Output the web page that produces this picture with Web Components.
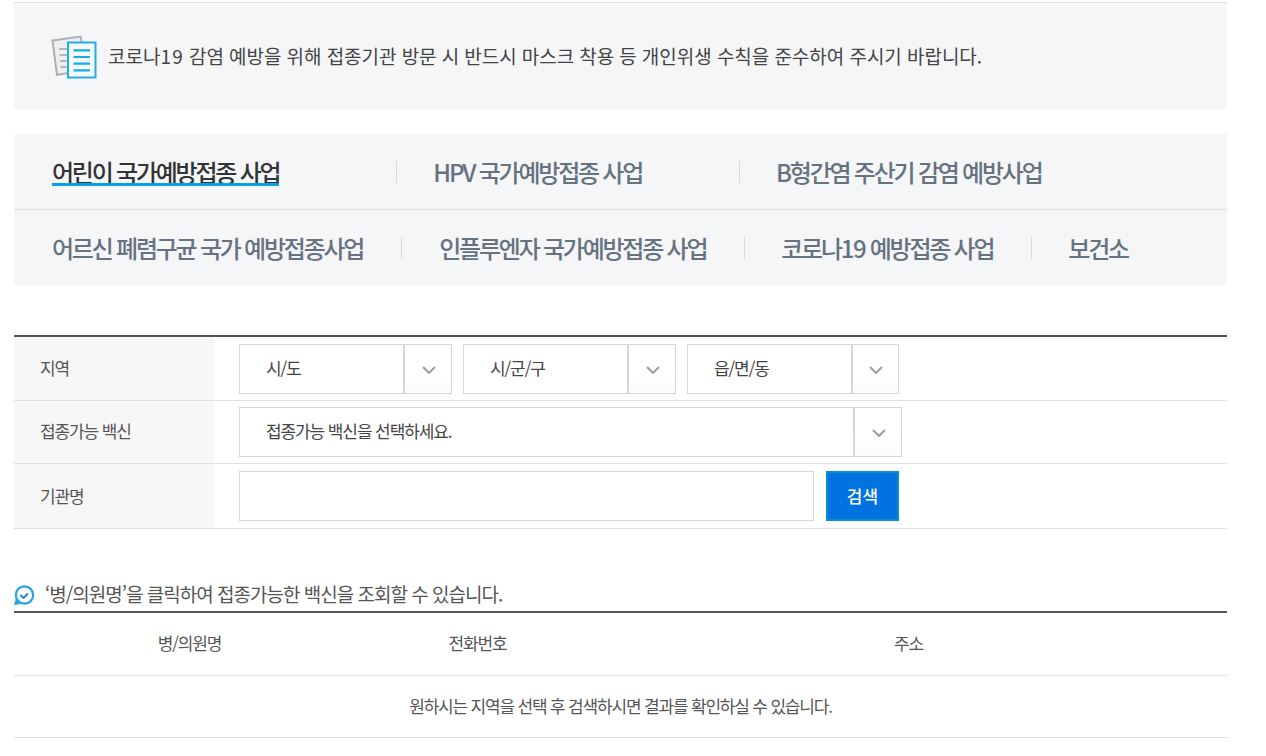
<!DOCTYPE html>
<html lang="ko">
<head>
<meta charset="utf-8">
<style>
html, body { margin: 0; padding: 0; background: #fff; }
body { font-family: "Noto Sans CJK KR", "Noto Sans", sans-serif; color: #444; overflow: hidden; }
</style>
</head>
<body>
<vac-page></vac-page>
<script>
class VacNotice extends HTMLElement {
    constructor() {
        super()
        this.attachShadow({ mode: "open" }).innerHTML = `
            <style>
            :host { display: flex; align-items: center; height: 105px; margin-top: 2px; border-top: 1px solid #e2e3e6; background: #f5f6f8; padding-left: 37px; }
            svg { display: block; width: 46px; height: 44px; margin-right: 11px; flex: none; margin-top: 1px; }
            span { font-size: 19px; word-spacing: -0.24px; color: #444; line-height: 26px; }
            </style>
            <svg viewBox="0 0 46 44" fill="none">
                <path d="M1.500 5.500L29.500 1.500L31 8L18 8L18 38L6 39.800Z" fill="#eceef0" stroke="#aeb0b4" stroke-width="2"/>
                <path d="M8 14h9M8.500 20h8.500M9 26h8M9.500 32h7.500" stroke="#b4b6ba" stroke-width="2"/>
                <rect x="17" y="7.500" width="27.500" height="35" fill="#f4fbfe" stroke="#29abe2" stroke-width="2"/>
                <path d="M22.500 15.300h16.500M22.500 22h16.500M22.500 28.700h16.500M22.500 35.300h16.500" stroke="#1fa8e6" stroke-width="2.200"/>
            </svg>
            <span><slot></slot></span>
        `
    }
}

class VacTabs extends HTMLElement {
    constructor() {
        super()
        this.attachShadow({ mode: "open" }).innerHTML = `
            <style>
            :host { display: block; margin-top: 25px; background: #f5f6f8; }
            </style>
            <slot></slot>
        `
    }
}

class VacTabRow extends HTMLElement {
    constructor() {
        super()
        this.attachShadow({ mode: "open" }).innerHTML = `
            <style>
            :host { display: flex; align-items: center; height: 75px; padding-left: 38px; }
            :host([line]) { border-top: 1px solid #dcdee2; }
            </style>
            <slot></slot>
        `
    }
}

class VacTab extends HTMLElement {
    constructor() {
        super()
        this.attachShadow({ mode: "open" }).innerHTML = `
            <style>
            :host { display: block; font-size: 24px; font-weight: 500; letter-spacing: -2.230px; color: #667280; line-height: 26px; position: relative; white-space: nowrap; }
            :host([active]) { color: #333; }
            u { display: none; position: absolute; left: 0; right: 0; bottom: -1px; height: 3px; background: #0aa0e6; }
            :host([active]) u { display: block; }
            :host([sep]) { margin-right: calc(var(--r) + var(--l)); }
            :host([sep])::after { content: ""; position: absolute; top: 2px; height: 22px; width: 1px; background: #d6d9dd; right: calc(var(--r) * -1); }
            </style>
            <slot></slot><u></u>
        `
    }
}

class VacFormRow extends HTMLElement {
    static get observedAttributes() {
        return ["label"]
    }

    constructor() {
        super()
        this.attachShadow({ mode: "open" }).innerHTML = `
            <style>
            :host { display: flex; border-bottom: 1px solid #dfe0e3; }
            .label { width: 174px; padding: 0 0 var(--lb, 2px) 26px; box-sizing: content-box; background: #f7f7f8; font-size: 17px; letter-spacing: -1.100px; color: #555; display: flex; align-items: center; }
            .body { flex: 1; display: flex; align-items: center; gap: 11px; padding: var(--pt) 0 var(--pb) 25px; }
            </style>
            <div class="label"></div>
            <div class="body"><slot></slot></div>
        `
        this.labelEl = this.shadowRoot.querySelector(".label")
    }

    attributeChangedCallback(attrName, oldVal, newVal) {
        if (attrName === "label") {
            this.labelEl.textContent = newVal
        }
    }
}

class VacSelect extends HTMLElement {
    constructor() {
        super()
        this.attachShadow({ mode: "open" }).innerHTML = `
            <style>
            :host { display: flex; height: 50px; box-sizing: border-box; border: 1px solid #d5d7dd; background: #fff; width: var(--w); }
            .text { flex: 1; padding-left: 26px; font-size: 17px; letter-spacing: -1.100px; color: #444; line-height: 45px; }
            .arrow { width: var(--aw, 48px); border-left: 2px solid #d5d7dd; padding-left: 1px; display: flex; align-items: center; justify-content: center; background: linear-gradient(#fff, #fff 60%, #fafbfd); box-sizing: border-box; }
            svg { width: 14px; height: 8px; display: block; margin-top: 2px; }
            </style>
            <div class="text"><slot></slot></div>
            <div class="arrow"><svg viewBox="0 0 14 8" fill="none"><path d="M1 1l6 6 6-6" stroke="#9a9da2" stroke-width="2"/></svg></div>
        `
    }
}

class VacSearch extends HTMLElement {
    constructor() {
        super()
        this.attachShadow({ mode: "open" }).innerHTML = `
            <style>
            :host { display: flex; gap: 12px; }
            .box { width: 575px; height: 50px; box-sizing: border-box; border: 1px solid #d5d7dd; background: #fff; }
            button { width: 73px; height: 50px; box-sizing: border-box; border: 2px solid #0b8ad8; background: #0073e0; color: #fff; font: 500 17px "Noto Sans CJK KR", sans-serif; padding: 0 0 2px; }
            </style>
            <div class="box"></div>
            <button>검색</button>
        `
    }
}

class VacResults extends HTMLElement {
    constructor() {
        super()
        this.attachShadow({ mode: "open" }).innerHTML = `
            <style>
            :host { display: block; margin-top: 45px; }
            .hint { display: flex; align-items: center; height: 37px; border-bottom: 2px solid #555; font-size: 19px; letter-spacing: -1px; color: #555; }
            .hint span { padding-top: 2px; }
            svg { width: 21px; height: 21px; margin-right: 10px; margin-top: 6px; flex: none; display: block; }
            table { width: 100%; border-collapse: collapse; table-layout: fixed; font-size: 17px; letter-spacing: -1.100px; color: #555; }
            th, td { font-weight: 400; text-align: center; padding: 0 0 3px; height: 59px; border-bottom: 1px solid #dfe0e3; }
            td { height: 58px; letter-spacing: -1.180px; }
            </style>
            <div class="hint">
                <svg viewBox="0 0 21 21" fill="none">
                    <circle cx="10.500" cy="10" r="8.700" stroke="#29a3e0" stroke-width="2.200"/>
                    <path d="M0 19.800L6 19.500L2 13.500Z" fill="#29a3e0"/>
                    <path d="M6.500 10l3 3 4.500-4.500" stroke="#1f7fc0" stroke-width="1.800"/>
                </svg>
                <span>‘병/의원명’을 클릭하여 접종가능한 백신을 조회할 수 있습니다.</span>
            </div>
            <table>
                <colgroup><col style="width:351px"><col style="width:225px"><col></colgroup>
                <tr><th>병/의원명</th><th>전화번호</th><th>주소</th></tr>
                <tr><td colspan="3">원하시는 지역을 선택 후 검색하시면 결과를 확인하실 수 있습니다.</td></tr>
            </table>
        `
    }
}

class VacPage extends HTMLElement {
    constructor() {
        super()
        this.attachShadow({ mode: "open" }).innerHTML = `
            <style>
            :host { display: block; width: 1213px; margin-left: 14px; }
            vac-notice { height: 106px; }
            .form { margin-top: 50px; border-top: 2px solid #555; }
            .num { letter-spacing: 1.200px; }
            .num-tab { letter-spacing: -1.500px; }
            </style>
            <vac-notice>코로나<span class="num">19</span> 감염 예방을 위해 접종기관 방문 시 반드시 마스크 착용 등 개인위생 수칙을 준수하여 주시기 바랍니다.</vac-notice>
            <vac-tabs>
                <vac-tab-row>
                    <vac-tab active sep style="--r:118px;--l:36px">어린이 국가예방접종 사업</vac-tab>
                    <vac-tab sep style="--r:98px;--l:36px">HPV 국가예방접종 사업</vac-tab>
                    <vac-tab>B형간염 주산기 감염 예방사업</vac-tab>
                </vac-tab-row>
                <vac-tab-row line>
                    <vac-tab sep style="--r:39px;--l:37px">어르신 폐렴구균 국가 예방접종사업</vac-tab>
                    <vac-tab sep style="--r:39px;--l:36px">인플루엔자 국가예방접종 사업</vac-tab>
                    <vac-tab sep style="--r:39px;--l:36px">코로나<span class="num-tab">19</span> 예방접종 사업</vac-tab>
                    <vac-tab>보건소</vac-tab>
                </vac-tab-row>
            </vac-tabs>
            <div class="form">
                <vac-form-row label="지역" style="--pt:7px;--pb:6px">
                    <vac-select style="--w:213px">시/도</vac-select>
                    <vac-select style="--w:213px">시/군/구</vac-select>
                    <vac-select style="--w:212px;--aw:47px">읍/면/동</vac-select>
                </vac-form-row>
                <vac-form-row label="접종가능 백신" style="--pt:6px;--pb:6px;--lb:4px">
                    <vac-select style="--w:663px">접종가능 백신을 선택하세요.</vac-select>
                </vac-form-row>
                <vac-form-row label="기관명" style="--pt:7px;--pb:7px;--lb:2px">
                    <vac-search></vac-search>
                </vac-form-row>
            </div>
            <vac-results></vac-results>
        `
    }
}

window.customElements.define("vac-notice", VacNotice)
window.customElements.define("vac-tabs", VacTabs)
window.customElements.define("vac-tab-row", VacTabRow)
window.customElements.define("vac-tab", VacTab)
window.customElements.define("vac-form-row", VacFormRow)
window.customElements.define("vac-select", VacSelect)
window.customElements.define("vac-search", VacSearch)
window.customElements.define("vac-results", VacResults)
window.customElements.define("vac-page", VacPage)
</script>
</body>
</html>
